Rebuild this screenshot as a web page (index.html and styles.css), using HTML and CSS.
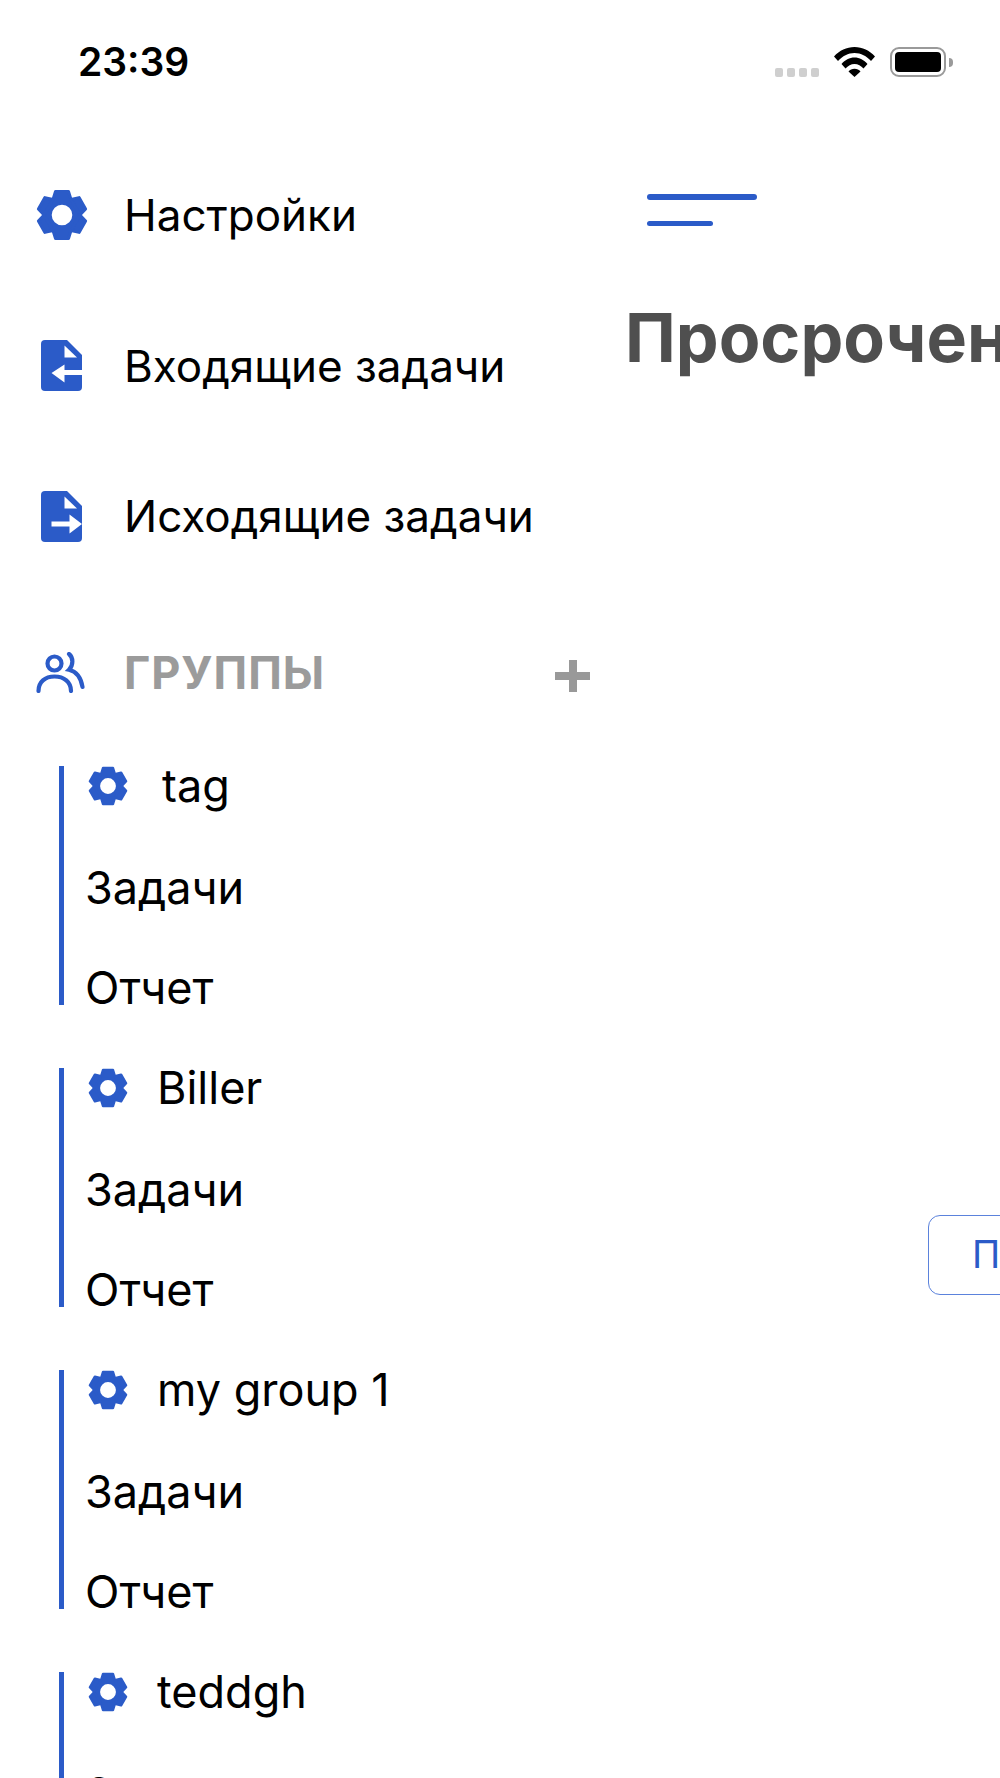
FILE: index.html
```html
<!DOCTYPE html>
<html lang="en">
<head>
    <meta charset="UTF-8">
    <meta name="viewport" content="width=device-width, initial-scale=1.0">
    <title>Просроченные задачи</title>
    <link rel="stylesheet" href="styles.css">
</head>
<body>
    <svg class="defs" width="0" height="0">
        <symbol id="gear" viewBox="0 0 52 52">
            <g transform="translate(26 26)" fill="currentColor" stroke="currentColor" stroke-width="3" stroke-linejoin="round">
                <circle r="14.2" fill="none" stroke-width="7.8"/>
                <path id="tooth" d="M-6.5 -23.5h13l2.5 8h-18z"/>
                <use href="#tooth" transform="rotate(60)"/>
                <use href="#tooth" transform="rotate(120)"/>
                <use href="#tooth" transform="rotate(180)"/>
                <use href="#tooth" transform="rotate(240)"/>
                <use href="#tooth" transform="rotate(300)"/>
            </g>
        </symbol>
    </svg>

    <div class="status-bar">
        <span class="time">23:39</span>
        <div class="status-icons">
            <div class="signal"><i></i><i></i><i></i><i></i></div>
            <svg class="wifi" viewBox="0 0 41 30">
                <path d="M0 9.5C5.5 3.5 12.5 0 20.5 0S35.500 3.500 41 9.500L37 14C32.500 9 27 6 20.500 6S8.500 9 4 14z"/>
                <path d="M7.500 17C11 13 15.500 10.500 20.500 10.500S30 13 33.500 17L29.500 21.500C27 18.800 24 17 20.500 17S14 18.800 11.500 21.500z"/>
                <path d="M14.500 24.500C16 22.800 18 21.800 20.500 21.800S25 22.800 26.500 24.500L20.500 30z"/>
            </svg>
            <div class="battery"><div class="battery-fill"></div></div>
            <div class="battery-nub"></div>
        </div>
    </div>

    <div class="screen">
        <div class="sidebar">
            <a class="nav-row">
                <span class="nav-icon"><svg class="gear-big"><use href="#gear"/></svg></span>
                <span>Настройки</span>
            </a>
            <a class="nav-row">
                <span class="nav-icon">
                    <svg class="file-icon" viewBox="0 0 41 51">
                        <path fill="#2b5bc8" d="M4 0H26L41 15V47a4 4 0 0 1-4 4H4a4 4 0 0 1-4-4V4a4 4 0 0 1 4-4z"/>
                        <path fill="#fff" d="M23.500 5.500L36 17.500H23.500z"/>
                        <path fill="#fff" d="M10.500 33L23.500 24.500V30H41V35H23.500V42.500z"/>
                    </svg>
                </span>
                <span>Входящие задачи</span>
            </a>
            <a class="nav-row">
                <span class="nav-icon">
                    <svg class="file-icon" viewBox="0 0 41 51">
                        <path fill="#2b5bc8" d="M4 0H26L41 15V47a4 4 0 0 1-4 4H4a4 4 0 0 1-4-4V4a4 4 0 0 1 4-4z"/>
                        <path fill="#fff" d="M23.500 5.500L36 17.500H23.500z"/>
                        <path fill="#fff" d="M10.500 30.500H28.500V23.500L41 33L28.500 42.500V35.500H10.500z"/>
                    </svg>
                </span>
                <span>Исходящие задачи</span>
            </a>

            <div class="groups-head">
                <span class="nav-icon">
                    <svg class="users-icon" viewBox="0 0 49 41" fill="none" stroke="#2b5bc8" stroke-width="4.200" stroke-linecap="round">
                        <circle cx="18.500" cy="11.500" r="7"/>
                        <path d="M2.500 39C2.500 30 9 24.500 18.500 24.500S35 30 35 39"/>
                        <path d="M33 2C37.500 5.500 37.500 13.500 33 17.800C40 19.500 45 26 46.500 35"/>
                    </svg>
                </span>
                <span class="groups-title">ГРУППЫ</span>
                <span class="plus"></span>
            </div>

            <div class="group">
                <div class="group-name"><svg class="gear-small"><use href="#gear"/></svg><span class="name-tag">tag</span></div>
                <div class="group-link">Задачи</div>
                <div class="group-link">Отчет</div>
            </div>
            <div class="group">
                <div class="group-name"><svg class="gear-small"><use href="#gear"/></svg><span>Biller</span></div>
                <div class="group-link">Задачи</div>
                <div class="group-link">Отчет</div>
            </div>
            <div class="group">
                <div class="group-name"><svg class="gear-small"><use href="#gear"/></svg><span>my group 1</span></div>
                <div class="group-link">Задачи</div>
                <div class="group-link">Отчет</div>
            </div>
            <div class="group">
                <div class="group-name"><svg class="gear-small"><use href="#gear"/></svg><span>teddgh</span></div>
                <div class="group-link">Задачи</div>
                <div class="group-link">Отчет</div>
            </div>
        </div>

        <div class="main">
            <div class="menu-btn"><i></i><i class="short"></i></div>
            <h1>Просроченные задачи</h1>
            <div class="more-btn">Показать</div>
        </div>
    </div>
</body>
</html>
```

FILE: styles.css
```css
html, body {
    margin: 0;
    height: 100%;
}

body {
    width: 1000px;
    height: 1778px;
    overflow: hidden;
    background: #fff;
    color: #000;
    font-family: Inter, "Noto Sans", sans-serif;
}

.defs {
    position: absolute;
}

/* Status bar */
.status-bar {
    height: 120px;
    display: flex;
    justify-content: space-between;
    padding: 40px 47px 0 78px;
    box-sizing: border-box;
}

.time {
    font-size: 39px;
    font-weight: 600;
    line-height: 44px;
}

.status-icons {
    display: flex;
    align-items: flex-start;
    padding-top: 7px;
}

.signal {
    display: flex;
    gap: 4px;
    margin-top: 21px;
    margin-right: 15px;
}

.signal i {
    width: 8px;
    height: 9px;
    border-radius: 2px;
    background: #cfcfcf;
}

.wifi {
    width: 41px;
    height: 30px;
    margin-right: 15px;
    fill: #000;
}

.battery {
    width: 56px;
    height: 30px;
    box-sizing: border-box;
    border: 2.5px solid #9a9a9a;
    border-radius: 9px;
    padding: 3px;
}

.battery-fill {
    height: 100%;
    background: #000;
    border-radius: 4px;
}

.battery-nub {
    width: 4px;
    height: 9px;
    margin: 11px 0 0 3px;
    background: #9a9a9a;
    border-radius: 0 4px 4px 0;
}

/* Layout */
.screen {
    display: flex;
}

.sidebar {
    flex: none;
    width: 626px;
    padding-top: 20px;
    box-sizing: border-box;
}

.main {
    flex: none;
    width: 1000px;
}

/* Side menu */
.nav-row {
    height: 150.5px;
    display: flex;
    align-items: center;
    font-size: 44px;
}

.nav-icon {
    flex: none;
    width: 124px;
    padding-left: 36px;
    box-sizing: border-box;
    display: flex;
}

.gear-big {
    width: 52px;
    height: 52px;
}

.gear-big, .gear-small {
    color: #2b5bc8;
}

.file-icon {
    width: 41px;
    height: 51px;
    margin-left: 5px;
}

.users-icon {
    width: 49px;
    height: 41px;
}

.groups-head {
    height: 88px;
    margin-top: 37px;
    margin-bottom: 49px;
    display: flex;
    align-items: center;
    position: relative;
}

.groups-title {
    font-size: 45px;
    font-weight: 700;
    color: #9b9b9b;
    letter-spacing: 1px;
}

.plus {
    position: absolute;
    left: 555px;
    top: 30px;
    width: 35px;
    height: 35px;
    background:
        linear-gradient(#999, #999) center / 35px 8px no-repeat,
        linear-gradient(#999, #999) center / 8px 32px no-repeat;
}

/* Groups */
.group {
    height: 239px;
    margin: 0 0 63px 59px;
    border-left: 5px solid #2b5bc8;
    padding-left: 21px;
    display: flex;
    flex-direction: column;
}

.group-name {
    height: 40px;
    display: flex;
    align-items: center;
    font-size: 45px;
}

.gear-small {
    width: 40px;
    height: 40px;
    margin: 0 29px 0 3px;
}

.name-tag {
    margin-left: 5px;
}

.group-link {
    font-size: 45px;
    line-height: 50px;
    margin-top: 50px;
}

.group-name + .group-link {
    margin-top: 57px;
}

/* Main panel */
.menu-btn {
    margin: 74px 0 0 21px;
    display: flex;
    flex-direction: column;
    gap: 21px;
}

.menu-btn i {
    display: block;
    width: 110px;
    height: 5.5px;
    background: #2b5bc8;
    border-radius: 3px;
}

.menu-btn i.short {
    width: 66px;
}

h1 {
    margin: 71px 0 0 -1px;
    font-size: 68px;
    line-height: 80px;
    font-weight: 700;
    color: #4f4f4f;
    white-space: nowrap;
}

.more-btn {
    margin: 838px 0 0 302px;
    width: 300px;
    height: 80px;
    box-sizing: border-box;
    border: 1.500px solid #5b82dc;
    border-radius: 12px;
    padding-left: 43px;
    font-size: 38px;
    line-height: 77px;
    color: #2b5bc8;
}
```
